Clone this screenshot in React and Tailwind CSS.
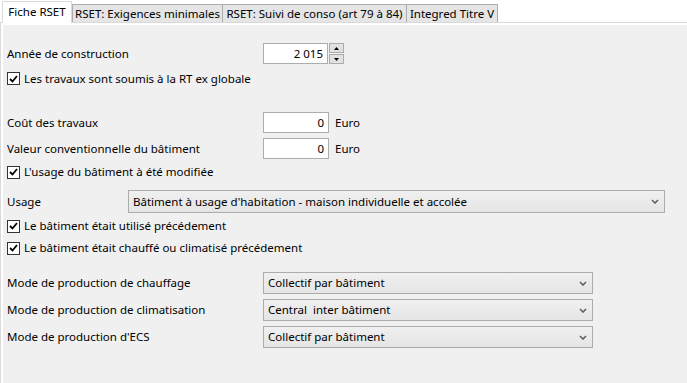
import { useState } from 'react'

const FONT = { fontFamily: '"Noto Sans", "Open Sans", sans-serif' }

function Tab({ label, active, width, first }) {
  if (active) {
    return (
      <div className={`relative z-10 -mb-px ml-[2px] flex h-[22px] items-start justify-center border border-b-0 border-[#d9d9d9] bg-white pt-[2px] ${width}`}>
        <span className="text-[11.5px] leading-[16px] text-black">{label}</span>
      </div>
    )
  }
  return (
    <div className={`flex h-[18px] items-center justify-center border border-b-0 border-[#acacac] bg-[#e5e5e5] ${first ? '' : '-ml-px'} ${width}`}>
      <span className="text-[11.5px] leading-[16px] text-black">{label}</span>
    </div>
  )
}

function Checkbox({ label, checked = true }) {
  return (
    <label className="flex h-full items-center gap-[4px]">
      <span className="flex h-[13px] w-[13px] items-center justify-center border border-[#333333] bg-white">
        {checked && (
          <svg width="9" height="8" viewBox="0 0 9 8">
            <path d="M1 4 L3.5 6.5 L8 1" fill="none" stroke="#000" strokeWidth="1.8" />
          </svg>
        )}
      </span>
      <span className="text-[11.5px] text-black">{label}</span>
    </label>
  )
}

function Chevron() {
  return (
    <svg width="8" height="5" viewBox="0 0 8 5" className="shrink-0">
      <path d="M1 1 L4 4 L7 1" fill="none" stroke="#606060" strokeWidth="1.6" />
    </svg>
  )
}

function Select({ value, width }) {
  return (
    <div className={`flex h-full items-center justify-between border border-[#acacac] bg-gradient-to-b from-[#f0f0f0] to-[#e5e5e5] pl-[4px] pr-[5px] ${width}`}>
      <span className="text-[11.5px] text-black whitespace-pre">{value}</span>
      <Chevron />
    </div>
  )
}

function NumberBox({ value, width }) {
  return (
    <div className={`flex h-full items-center justify-end border border-[#adadad] bg-white pr-[4px] ${width}`}>
      <span className="text-[11.5px] text-black">{value}</span>
    </div>
  )
}

function Spinner() {
  return (
    <div className="ml-px flex h-full w-[15px] flex-col gap-px">
      <button className="flex flex-1 items-center justify-center border border-[#adadad] bg-[#e1e1e1]">
        <svg width="5" height="3" viewBox="0 0 5 3"><path d="M0 3 L2.5 0 L5 3 Z" fill="#000" /></svg>
      </button>
      <button className="flex flex-1 items-center justify-center border border-[#adadad] bg-[#e1e1e1]">
        <svg width="5" height="3" viewBox="0 0 5 3"><path d="M0 0 L2.5 3 L5 0 Z" fill="#000" /></svg>
      </button>
    </div>
  )
}

function Row({ label, className, children, labelWidth = 'w-[256px]' }) {
  return (
    <div className={`flex items-center ${className}`}>
      <div className={`shrink-0 text-[11.5px] text-black ${labelWidth}`}>{label}</div>
      {children}
    </div>
  )
}

const MODES = [
  { label: 'Mode de production de chauffage', value: 'Collectif par bâtiment' },
  { label: 'Mode de production de climatisation', value: 'Central  inter bâtiment' },
  { label: "Mode de production d'ECS", value: 'Collectif par bâtiment' },
]

export default function App() {
  const [year] = useState('2 015')
  return (
    <div className="flex h-[383px] w-[687px] flex-col overflow-hidden bg-white" style={FONT}>
      <div className="flex h-[22px] shrink-0 items-end">
        <Tab label="Fiche RSET" active width="w-[70px]" />
        <Tab label="RSET: Exigences minimales" width="w-[151px]" first />
        <Tab label="RSET: Suivi de conso (art 79 à 84)" width="w-[185px]" />
        <Tab label="Integred Titre V" width="w-[92px]" />
      </div>
      <div className="flex flex-1 flex-col border-l border-t border-[#d9d9d9] p-[2px] pr-0 pb-0">
        <div className="flex flex-1 flex-col bg-[#f0f0f0] pl-[4px]">
          <Row label="Année de construction" className="mt-[18px] h-[21px]">
            <NumberBox value={year} width="w-[65px]" />
            <Spinner />
          </Row>
          <div className="mt-[4px] h-[21px]">
            <Checkbox label="Les travaux sont soumis à la RT ex globale" />
          </div>

          <Row label="Coût des travaux" className="mt-[23px] h-[21px]">
            <NumberBox value="0" width="w-[66px]" />
            <span className="ml-[6px] text-[11.5px] text-black">Euro</span>
          </Row>
          <Row label="Valeur conventionnelle du bâtiment" className="mt-[5px] h-[21px]">
            <NumberBox value="0" width="w-[66px]" />
            <span className="ml-[6px] text-[11.5px] text-black">Euro</span>
          </Row>
          <div className="mt-[3px] h-[20px]">
            <Checkbox label="L'usage du bâtiment à été modifiée" />
          </div>

          <Row label="Usage" labelWidth="w-[121px]" className="mt-[8px] h-[23px]">
            <Select value="Bâtiment à usage d'habitation - maison individuelle et accolée" width="w-[537px]" />
          </Row>
          <div className="mt-[3px] h-[20px]">
            <Checkbox label="Le bâtiment était utilisé précédement" />
          </div>
          <div className="mt-[2px] h-[20px]">
            <Checkbox label="Le bâtiment était chauffé ou climatisé précédement" />
          </div>

          <div className="mt-[14px] flex flex-col gap-[5px]">
            {MODES.map(({ label, value }) => (
              <Row key={label} label={label} className="h-[22px]">
                <Select value={value} width="w-[330px]" />
              </Row>
            ))}
          </div>
        </div>
      </div>
    </div>
  )
}
